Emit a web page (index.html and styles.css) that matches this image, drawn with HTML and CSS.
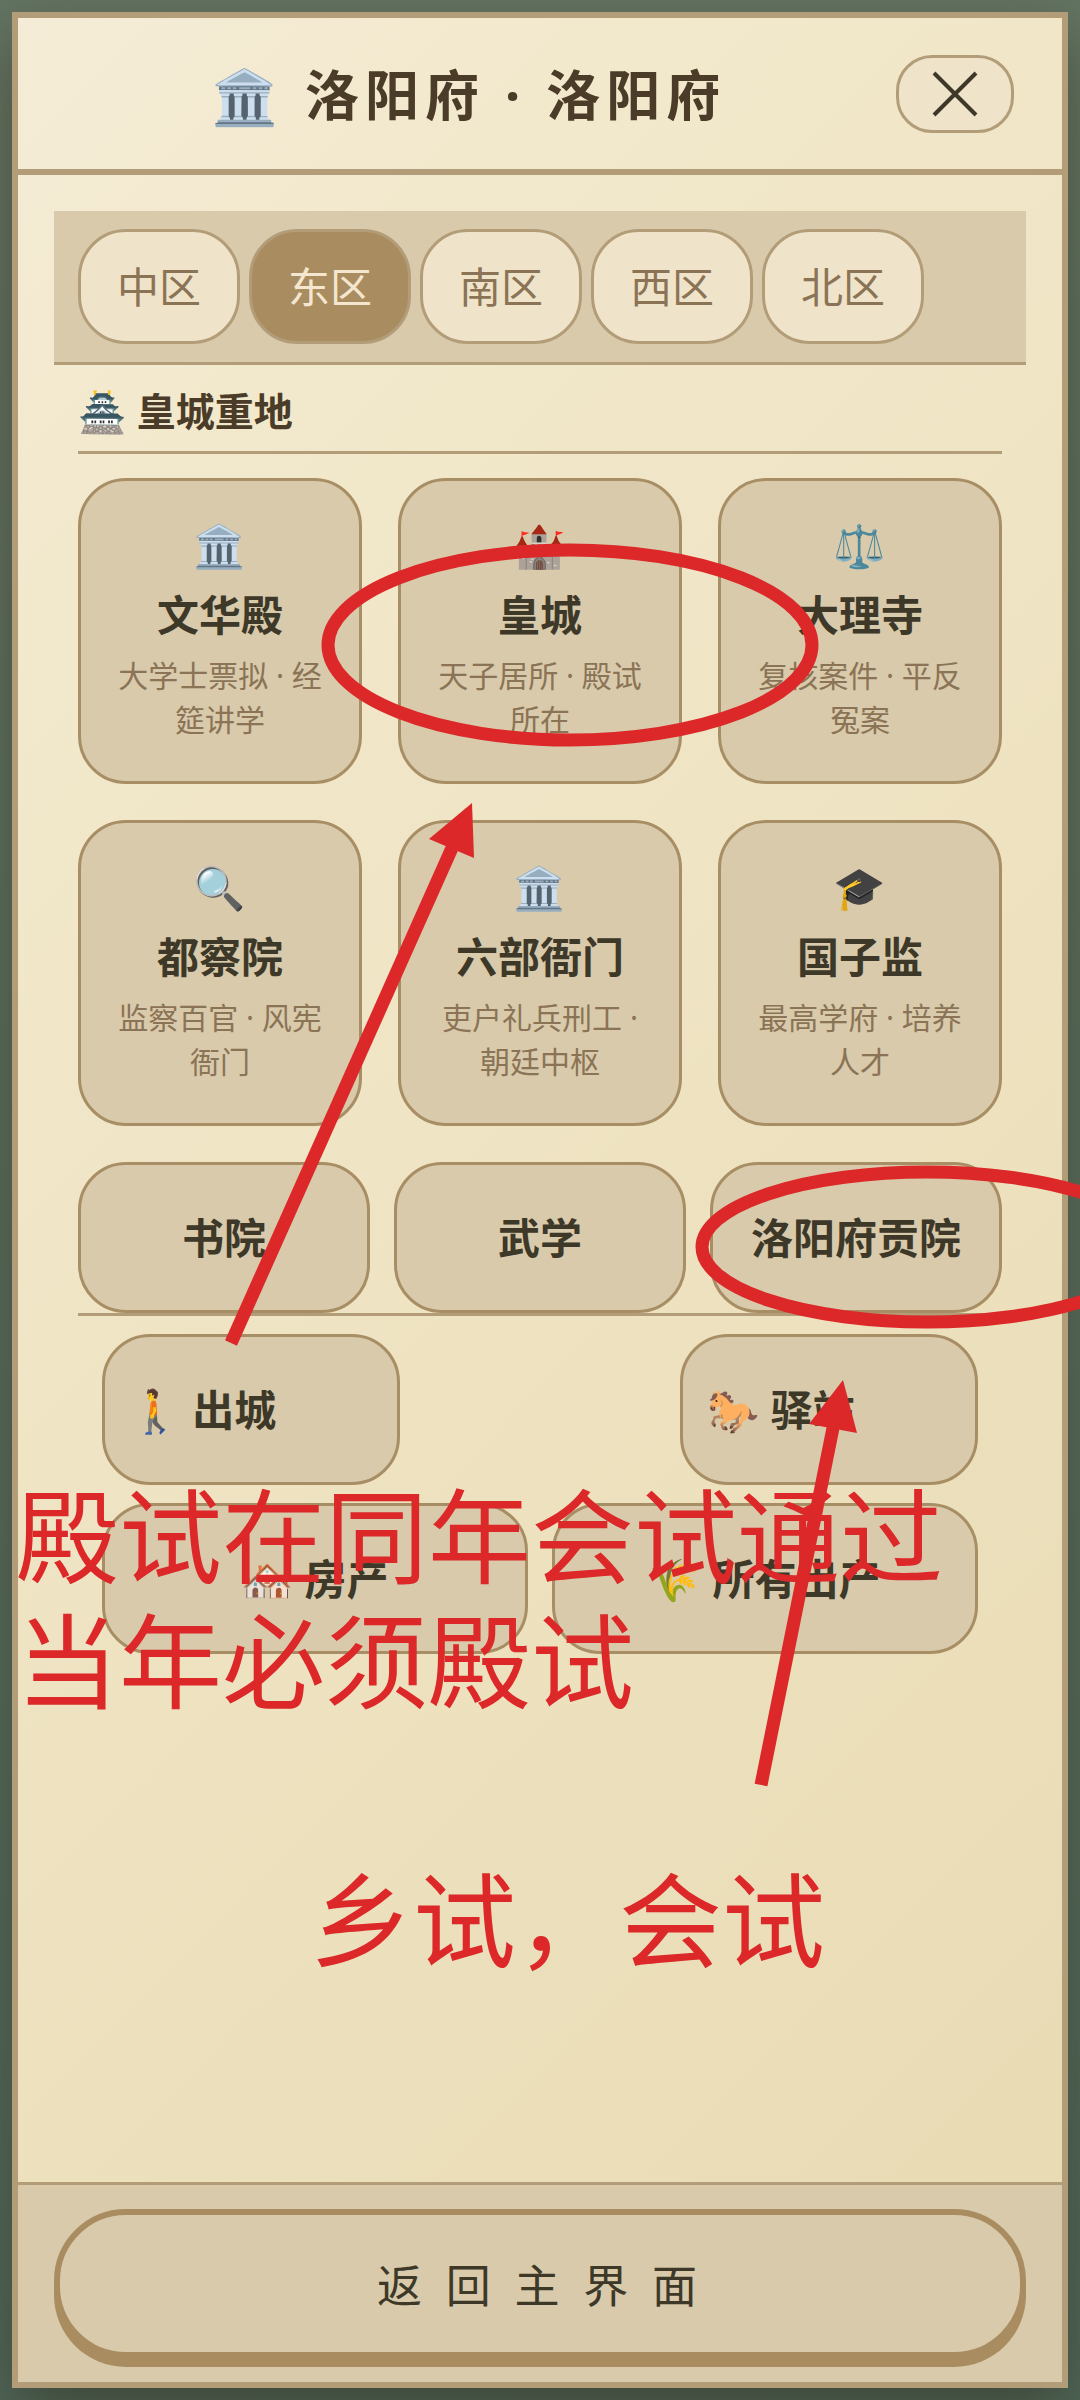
FILE: index.html
```html
<!DOCTYPE html>
<html lang="zh-CN">
<head>
    <meta charset="UTF-8">
    <meta name="viewport" content="width=device-width, initial-scale=1.0">
    <title>洛阳府 · 洛阳府</title>
    <link rel="stylesheet" href="styles.css">
</head>
<body>

    <div class="panel">
        <!-- Header -->
        <header class="header">
            <h1>🏛️ 洛阳府 · 洛阳府</h1>
            <button class="close-btn" aria-label="关闭">
                <svg class="close-icon" viewBox="0 0 46 46"><path d="M2 2 L44 44 M44 2 L2 44"/></svg>
            </button>
        </header>

        <main class="content">
            <!-- District tabs -->
            <nav class="tabs">
                <button class="tab">中区</button>
                <button class="tab active">东区</button>
                <button class="tab">南区</button>
                <button class="tab">西区</button>
                <button class="tab">北区</button>
            </nav>

            <section class="district">
                <h2>🏯 皇城重地</h2>

                <div class="card-grid">
                    <button class="card">
                        <span class="card-icon">🏛️</span>
                        <span class="card-name">文华殿</span>
                        <span class="card-desc">大学士票拟 · 经筵讲学</span>
                    </button>
                    <button class="card">
                        <span class="card-icon">🏰</span>
                        <span class="card-name">皇城</span>
                        <span class="card-desc">天子居所 · 殿试所在</span>
                    </button>
                    <button class="card">
                        <span class="card-icon">⚖️</span>
                        <span class="card-name">大理寺</span>
                        <span class="card-desc">复核案件 · 平反冤案</span>
                    </button>
                    <button class="card">
                        <span class="card-icon">🔍</span>
                        <span class="card-name">都察院</span>
                        <span class="card-desc">监察百官 · 风宪衙门</span>
                    </button>
                    <button class="card">
                        <span class="card-icon">🏛️</span>
                        <span class="card-name">六部衙门</span>
                        <span class="card-desc">吏户礼兵刑工 · 朝廷中枢</span>
                    </button>
                    <button class="card">
                        <span class="card-icon">🎓</span>
                        <span class="card-name">国子监</span>
                        <span class="card-desc">最高学府 · 培养人才</span>
                    </button>
                </div>

                <div class="school-row">
                    <button class="place">书院</button>
                    <button class="place">武学</button>
                    <button class="place">洛阳府贡院</button>
                </div>

                <div class="actions">
                    <div class="travel-row">
                        <button class="place travel">🚶 出城</button>
                        <button class="place travel">🐎 驿站</button>
                    </div>
                    <div class="estate-row">
                        <button class="place">🏘️ 房产</button>
                        <button class="place">🌾 所有出产</button>
                    </div>
                </div>
            </section>
        </main>

        <footer class="footer">
            <button class="back-btn">返 回 主 界 面</button>
        </footer>
    </div>

    <!-- Red pen notes over the panel -->
    <svg class="notes" width="1080" height="2400" viewBox="0 0 1080 2400">
        <g class="note-line">
            <ellipse cx="570" cy="645" rx="242" ry="95"/>
            <ellipse cx="927" cy="1247" rx="225" ry="75"/>
            <path d="M231 1343 L452 848"/>
            <path d="M761 1785 L833 1428"/>
        </g>
        <g class="note-fill">
            <path d="M472 803 L429 839 L474 858 Z"/>
            <path d="M843 1380 L809 1424 L857 1433 Z"/>
            <text x="16" y="1576">殿试在同年会试通过</text>
            <text x="16" y="1701">当年必须殿试</text>
            <text x="310" y="1960">乡试，会试</text>
        </g>
    </svg>

</body>
</html>
```
FILE: styles.css
```css
/* Global Styles */
* {
    box-sizing: border-box;
}

body {
    margin: 0;
    padding: 12px;
    min-height: 100vh;
    display: flex;
    position: relative;
    overflow-x: hidden;
    font-family: "Noto Sans", "Noto Sans CJK SC", "Noto Color Emoji", sans-serif;
    background: linear-gradient(#647563, #50685a);
    color: #3d3828;
}

button {
    font: inherit;
    color: inherit;
    cursor: pointer;
    margin: 0;
}

.panel {
    flex: 1;
    min-width: 0;
    display: flex;
    flex-direction: column;
    border: 6px solid #b39d78;
    background: linear-gradient(135deg, #f5ecd7 0%, #f2e8cb 20%, #e8dab2 100%);
    box-shadow: 0 24px 60px rgba(40, 30, 15, 0.45);
}

/* Header */
.header {
    display: flex;
    align-items: center;
    gap: 24px;
    padding: 36px 48px;
    border-bottom: 6px solid #b39d78;
}

.header h1 {
    flex: 1;
    margin: 0;
    padding-top: 4px;
    font-size: 54px;
    line-height: 75px;
    letter-spacing: 6px;
    text-align: center;
    color: #4a3c28;
}

.close-btn {
    display: flex;
    align-items: center;
    justify-content: center;
    width: 118px;
    height: 78px;
    padding: 0;
    border: 3px solid #b39d78;
    border-radius: 36px;
    background: #efe4ca;
}

.close-icon {
    width: 46px;
    height: 46px;
    fill: none;
    stroke: #3d3828;
    stroke-width: 4;
}

.content {
    flex: 1;
    padding: 36px;
}

/* Tabs */
.tabs {
    display: flex;
    gap: 9px;
    padding: 18px 24px;
    background: #d8caab;
    border-bottom: 3px solid #b39d78;
}

.tab {
    padding: 24px 36px;
    border: 3px solid #b39d78;
    border-radius: 48px;
    background: #efe4ca;
    color: #8b7355;
    font-size: 42px;
    line-height: 61px;
}

.tab.active {
    background: #a98d61;
    color: #f5e6cf;
}

/* Places */
.district {
    padding: 0 24px;
}

.district h2 {
    margin: 0 0 24px;
    padding: 18px 0 12px;
    border-bottom: 3px solid #b39d78;
    font-size: 39px;
    line-height: 56px;
    color: #4a3c28;
}

.card-grid {
    display: grid;
    grid-template-columns: repeat(3, 1fr);
    gap: 36px;
}

.card,
.place {
    border: 3px solid #a88e64;
    border-radius: 48px;
    background: #d8caab;
}

.card {
    display: flex;
    flex-direction: column;
    align-items: center;
    gap: 9px;
    padding: 33px 30px 39px;
}

.card-icon,
.card-name {
    font-size: 42px;
    line-height: 61px;
}

.card-name {
    font-weight: bold;
}

.card-desc {
    font-size: 30px;
    line-height: 44px;
    color: #8b7355;
}

.school-row {
    display: grid;
    grid-template-columns: repeat(3, 1fr);
    gap: 24px;
    margin-top: 36px;
}

.place {
    padding: 42px 24px;
    font-size: 42px;
    line-height: 61px;
    font-weight: bold;
    white-space: nowrap;
}

.actions {
    display: flex;
    flex-direction: column;
    gap: 18px;
    padding: 18px 24px;
    border-top: 3px solid #b39d78;
}

.travel-row {
    display: flex;
    justify-content: space-between;
}

.travel {
    width: 34%;
    text-align: left;
}

.estate-row {
    display: grid;
    grid-template-columns: 1fr 1fr;
    gap: 24px;
}

/* Footer */
.footer {
    padding: 24px 36px;
    border-top: 3px solid #b39d78;
    background: #d8caab;
}

.back-btn {
    width: 100%;
    padding: 38px 36px 34px;
    border: 6px solid #a98d61;
    border-radius: 72px;
    background: #d8caab;
    box-shadow: 0 9px 0 #a98d61;
    font-size: 45px;
    line-height: 65px;
    letter-spacing: 6px;
}

/* Pen notes */
.notes {
    position: absolute;
    top: 0;
    left: 0;
    pointer-events: none;
}

.note-line {
    fill: none;
    stroke: #dc2828;
    stroke-width: 13px;
}

.note-fill {
    fill: #dc2828;
    font-size: 103px;
}
```
